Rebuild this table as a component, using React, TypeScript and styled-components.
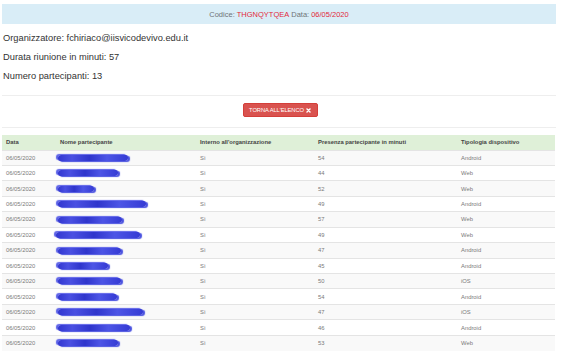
import React from "react";
import styled, { createGlobalStyle } from "styled-components";

const GlobalStyle = createGlobalStyle`
  html, body { margin: 0; padding: 0; background: #fff; }
  body { font-family: "Liberation Sans", Arial, sans-serif; color: #333; }
  *, *::before, *::after { box-sizing: border-box; }
`;

const Page = styled.div`
  width: 556px;
  padding: 4px 0 0 2px;
  display: flex;
  flex-direction: column;
`;

const InfoBar = styled.div`
  height: 20px;
  background: #d9edf7;
  display: flex;
  align-items: center;
  justify-content: center;
  font-size: 7.5px;
  color: #6f7478;
  gap: 2px;
`;

const Accent = styled.span`
  color: #e2293b;
`;

const Details = styled.div`
  margin-top: 4.5px;
  display: flex;
  flex-direction: column;
`;

const DetailLine = styled.div`
  height: 19px;
  line-height: 19px;
  font-size: 9.3px;
  color: #333;
  padding-left: 1px;
`;

const Divider = styled.div<{ $top?: number }>`
  height: 1px;
  margin-top: ${(p) => p.$top ?? 0}px;
  background: #eeeeee;
`;

const ActionRow = styled.div`
  display: flex;
  justify-content: center;
  padding: 7px 0 10px 0;
`;

const BackButton = styled.button`
  height: 14px;
  width: 75px;
  margin-left: 2px;
  border: 1px solid #d43f3a;
  background: #d9534f;
  color: #fff;
  border-radius: 2px;
  font-family: "Liberation Sans", Arial, sans-serif;
  font-size: 5.8px;
  padding: 0;
  display: flex;
  align-items: center;
  justify-content: center;
  gap: 2px;
  letter-spacing: -0.1px;
`;

const Table = styled.table`
  margin-top: 7px;
  width: 553px;
  border-collapse: collapse;
  table-layout: fixed;
  font-size: 5.85px;
`;

const HeadRow = styled.tr`
  background: #dff0d8;
  height: 15px;
`;

const HeadCell = styled.th<{ $w: number }>`
  width: ${(p) => p.$w}px;
  text-align: left;
  font-weight: bold;
  color: #444;
  padding: 0 0 0 4px;
  height: 15px;
`;

const BodyRow = styled.tr`
  height: 15.45px;
  &:nth-of-type(odd) { background: #f9f9f9; }
`;

const Cell = styled.td`
  border-top: 1px solid #e4e4e4;
  padding: 0 0 0 4px;
  color: #7a7a7a;
  height: 15.45px;
  white-space: nowrap;
  overflow: visible;
`;

const Smudge = styled.span`
  display: inline-block;
  height: 6px;
  vertical-align: middle;
  background: linear-gradient(90deg, #3237d0 0%, #4a50e2 20%, #2f35cc 45%, #4d55e6 70%, #353bd4 100%);
  border-radius: 3px 2px 3px 2px;
  filter: blur(0.7px);
  box-shadow: 2px 1px 1px #4a52e0, -2px -1px 1px #5a60e8;
`;

const columns = [
  { label: "Data", w: 54 },
  { label: "Nome partecipante", w: 140 },
  { label: "Interno all'organizzazione", w: 118 },
  { label: "Presenza partecipante in minuti", w: 143 },
  { label: "Tipologia dispositivo", w: 98 },
];

const rows = [
  { smudge: 70, min: 54, dev: "Android" },
  { smudge: 60, min: 44, dev: "Web" },
  { smudge: 36, min: 52, dev: "Web" },
  { smudge: 88, min: 49, dev: "Android" },
  { smudge: 64, min: 57, dev: "Web" },
  { smudge: 84, min: 49, dev: "Web", shift: -4 },
  { smudge: 63, min: 47, dev: "Android" },
  { smudge: 50, min: 45, dev: "Android" },
  { smudge: 63, min: 50, dev: "iOS" },
  { smudge: 59, min: 54, dev: "Android" },
  { smudge: 85, min: 47, dev: "iOS" },
  { smudge: 72, min: 46, dev: "Android" },
  { smudge: 60, min: 53, dev: "Web" },
];

const RemoveIcon = () => (
  <svg width="5" height="5" viewBox="0 0 10 10">
    <path d="M2 2 L8 8 M8 2 L2 8" stroke="#fff" strokeWidth="2.6" strokeLinecap="square" />
  </svg>
);

export default function App() {
  return (
    <>
      <GlobalStyle />
      <Page>
        <InfoBar>
          <span>Codice:</span>
          <Accent>THGNQYTQEA</Accent>
          <span>Data:</span>
          <Accent>06/05/2020</Accent>
        </InfoBar>
        <Details>
          <DetailLine>Organizzatore: fchiriaco@iisvicodevivo.edu.it</DetailLine>
          <DetailLine>Durata riunione in minuti: 57</DetailLine>
          <DetailLine>Numero partecipanti: 13</DetailLine>
        </Details>
        <Divider $top={9.5} />
        <ActionRow>
          <BackButton>
            <span>TORNA ALL'ELENCO</span>
            <RemoveIcon />
          </BackButton>
        </ActionRow>
        <Divider />
        <Table>
          <thead>
            <HeadRow>
              {columns.map((c) => (
                <HeadCell key={c.label} $w={c.w}>
                  {c.label}
                </HeadCell>
              ))}
            </HeadRow>
          </thead>
          <tbody>
            {rows.map((r, i) => (
              <BodyRow key={i}>
                <Cell>06/05/2020</Cell>
                <Cell>
                  <Smudge style={{ width: r.smudge, marginLeft: r.shift ?? -2 }} />
                </Cell>
                <Cell>Sì</Cell>
                <Cell>{r.min}</Cell>
                <Cell>{r.dev}</Cell>
              </BodyRow>
            ))}
          </tbody>
        </Table>
      </Page>
    </>
  );
}
